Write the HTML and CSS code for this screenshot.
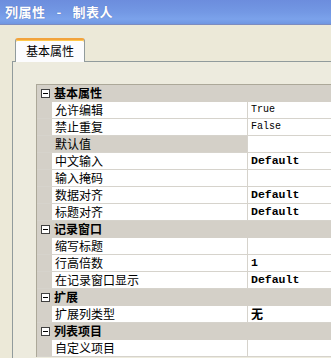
FILE: index.html
```html
<!DOCTYPE html>
<html>
<head>
<meta charset="utf-8">
<link rel="stylesheet" href="styles.css">
</head>
<body>
<div class="window">
  <div class="titlebar"><span class="ttext">列属性</span><span class="dash">-</span><span class="ttext">制表人</span></div>
  <div class="client">
    <div class="tabs">
      <div class="tab active">基本属性</div>
    </div>
    <div class="panel">
      <div class="grid">
        <div class="row cat"><span class="gut"><span class="box"></span></span><span class="cname">基本属性</span></div>
        <div class="row"><span class="gut"></span><span class="name">允许编辑</span><span class="val">True</span></div>
        <div class="row"><span class="gut"></span><span class="name">禁止重复</span><span class="val">False</span></div>
        <div class="row"><span class="gut"></span><span class="name sel">默认值</span><span class="val"></span></div>
        <div class="row"><span class="gut"></span><span class="name">中文输入</span><span class="val b">Default</span></div>
        <div class="row"><span class="gut"></span><span class="name">输入掩码</span><span class="val"></span></div>
        <div class="row"><span class="gut"></span><span class="name">数据对齐</span><span class="val b">Default</span></div>
        <div class="row"><span class="gut"></span><span class="name">标题对齐</span><span class="val b">Default</span></div>
        <div class="row cat"><span class="gut"><span class="box"></span></span><span class="cname">记录窗口</span></div>
        <div class="row"><span class="gut"></span><span class="name">缩写标题</span><span class="val"></span></div>
        <div class="row"><span class="gut"></span><span class="name">行高倍数</span><span class="val b">1</span></div>
        <div class="row"><span class="gut"></span><span class="name">在记录窗口显示</span><span class="val b">Default</span></div>
        <div class="row cat"><span class="gut"><span class="box"></span></span><span class="cname">扩展</span></div>
        <div class="row"><span class="gut"></span><span class="name">扩展列类型</span><span class="val b cjk">无</span></div>
        <div class="row cat"><span class="gut"><span class="box"></span></span><span class="cname">列表项目</span></div>
        <div class="row"><span class="gut"></span><span class="name">自定义项目</span><span class="val"></span></div>
      </div>
    </div>
  </div>
</div>
</body>
</html>
```

FILE: styles.css
```css
html, body {
  margin: 0;
  padding: 0;
  width: 331px;
  height: 358px;
  overflow: hidden;
  background: #ECE9D8;
  font-family: "Noto Sans CJK SC", "DejaVu Sans", sans-serif;
  font-size: 12px;
}
.window {
  display: flex;
  flex-direction: column;
  height: 358px;
}
.titlebar {
  height: 24px;
  border-bottom: 1px solid #7C8CC0;
  background: linear-gradient(#6C8DDD 0%, #7398E4 50%, #7BA2EB 80%, #7097E2 100%);
  color: #FFFFFF;
  font-weight: bold;
  font-size: 13px;
  line-height: 24px;
  padding-left: 5px;
  display: flex;
  gap: 10px;
  text-shadow: 0 0 1px rgba(60,80,150,0.6);
}
.ttext {
  letter-spacing: 0.5px;
}
.dash {
  width: 7px;
  text-align: center;
}
.client {
  flex: 1;
  display: flex;
  flex-direction: column;
  padding-top: 13px;
  background: #ECE9D8;
}
.tabs {
  display: flex;
  padding-left: 15px;
  position: relative;
  z-index: 2;
  margin-bottom: -1px;
}
.tab {
  width: 58px;
  height: 22px;
  border: 1px solid #919B9C;
  border-bottom: none;
  border-top: 2px solid #F2A33C;
  border-radius: 3px 3px 0 0;
  background: #FCFCFE;
  box-shadow: inset 0 1px 0 #FFC84A;
  padding-left: 10px;
  line-height: 21px;
  color: #000;
}
.panel {
  flex: 1;
  margin-left: 12px;
  border-top: 1px solid #919B9C;
  border-left: 1px solid #919B9C;
  background: #EDEBDE;
  padding: 22px 0 0 23px;
  position: relative;
  z-index: 1;
}
.grid {
  border-top: 1px solid #ACA899;
  border-left: 1px solid #ACA899;
  background: #FFFFFF;
  overflow: hidden;
}
.row {
  display: flex;
  height: 16px;
  border-bottom: 1px solid #D6D3CC;
  line-height: 16px;
  white-space: nowrap;
}
.gut {
  width: 15px;
  flex: none;
  background: #D4D0C8;
  display: flex;
  align-items: center;
  justify-content: center;
}
.box {
  width: 7px;
  height: 7px;
  border: 1px solid #404040;
  background: #FFFFFF;
  position: relative;
  margin-left: 1px;
}
.box::after {
  content: "";
  position: absolute;
  left: 1px;
  right: 1px;
  top: 3px;
  height: 1px;
  background: #000;
}
.name {
  width: 192px;
  flex: none;
  padding-left: 3px;
  border-right: 1px solid #D6D3CC;
  color: #000;
}
.name.sel {
  background: #D4D0C8;
}
.val {
  padding-left: 3px;
  font-family: "Liberation Mono", "DejaVu Sans Mono", monospace;
  font-size: 10px;
  color: #000;
}
.val.b {
  font-weight: bold;
  font-size: 11.5px;
}
.val.cjk {
  font-family: "Noto Sans CJK SC", sans-serif;
  font-size: 12px;
}
.cat {
  background: #D4D0C8;
  border-bottom: 1px solid #D4D0C8;
}
.cname {
  padding-left: 2px;
  font-weight: bold;
  font-size: 12px;
}
```
